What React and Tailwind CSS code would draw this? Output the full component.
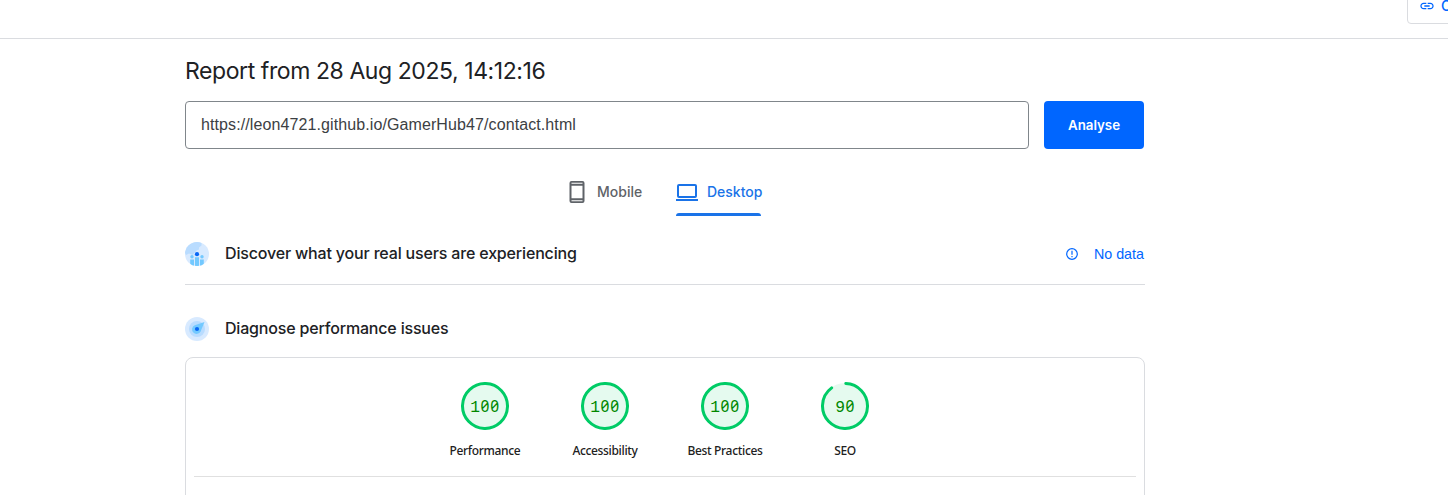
const SCORES = [
  { label: 'Performance', value: 100 },
  { label: 'Accessibility', value: 100 },
  { label: 'Best Practices', value: 100 },
  { label: 'SEO', value: 90 },
];

function Gauge({ label, value }) {
  const c = 2 * Math.PI * 22.5;
  const arc = value === 100 ? c : (value / 100) * c - 1.8;
  return (
    <div className="flex w-[120px] flex-col items-center">
      <div className="relative size-12">
        <svg viewBox="0 0 48 48" className="size-12">
          <circle cx="24" cy="24" r="23" fill="#e5faef" />
          <circle cx="24" cy="24" r="22.5" fill="none" stroke="#00cc66" strokeWidth="3" strokeLinecap="round"
            strokeDasharray={`${arc} ${c}`} transform="rotate(-88 24 24)" />
        </svg>
        <div className="absolute inset-0 flex items-baseline justify-center pt-[13px] font-['Liberation_Mono',monospace] text-[16.3px] leading-[22px] text-[#008800]">
          {String(value).split('').map((d, i) => (
            <span key={i} className={d === '0' ? "w-[9.8px] text-center font-['Noto_Sans',sans-serif] text-[15.5px] slashed-zero" : 'w-[9.8px] text-center'}>{d}</span>
          ))}
        </div>
      </div>
      <div className="mt-[11px] font-['Noto_Sans',sans-serif] text-xs font-medium leading-5 tracking-[-0.33px] whitespace-nowrap text-[#212121]">{label}</div>
    </div>
  );
}

function UsersIcon() {
  return (
    <svg viewBox="0 0 24 24" className="size-6">
      <defs><clipPath id="users"><circle cx="12" cy="12" r="12" /></clipPath></defs>
      <g clipPath="url(#users)">
        <rect width="24" height="24" fill="#d8eaff" />
        <path d="M0 0H16.5V3.5L14 5.5V7.5L11.5 8.5L9 11.5L7.5 13L4 11.5L1 13L0 11Z" fill="#b9dcff" />
        <g fill="#73c9ff">
          <circle cx="7" cy="14.7" r="1.7" /><circle cx="17" cy="14.7" r="1.7" />
          <path d="M5.2 17.5h3.8V24H5.2zM15 17.5h3.8V24H15zM10 15.2h4V24h-4z" />
        </g>
        <circle cx="12" cy="12.2" r="2.1" fill="#0867f5" />
      </g>
    </svg>
  );
}

function DiagnoseIcon() {
  return (
    <svg viewBox="0 0 24 24" className="size-6">
      <circle cx="12" cy="12" r="12" fill="#d8eaff" />
      <circle cx="12" cy="12" r="8" fill="#b9dcff" />
      <path d="M19.5 5L15.7 14.2A4.5 4.5 0 1 1 9.8 8.3Z" fill="#73c9ff" />
      <circle cx="12" cy="12" r="2.1" fill="#0867f5" />
    </svg>
  );
}

export default function App() {
  return (
    <div className="h-[495px] overflow-hidden bg-white font-['Inter',sans-serif] text-[#202124]">
      <header className="flex h-[39px] justify-end overflow-hidden border-b border-[#dadce0]">
        <button className="-mt-3 -mr-[80px] flex h-9 w-[121px] shrink-0 items-center gap-1.5 rounded border border-[#dadce0] pl-[11px] text-sm font-medium text-[#0066ff]">
          <svg viewBox="0 0 24 24" className="size-4 shrink-0" fill="currentColor">
            <path d="M3.9 12c0-1.71 1.39-3.1 3.1-3.1h4V7H7c-2.76 0-5 2.24-5 5s2.24 5 5 5h4v-1.9H7c-1.71 0-3.1-1.39-3.1-3.1zM8 13h8v-2H8v2zm9-6h-4v1.9h4c1.71 0 3.1 1.39 3.1 3.1s-1.39 3.1-3.1 3.1h-4V17h4c2.76 0 5-2.24 5-5s-2.24-5-5-5z" />
          </svg>
          <span className="whitespace-nowrap">Copy Link</span>
        </button>
      </header>
      <main className="ml-[185px] w-[960px]">
        <h1 className="pt-4 text-[23px] leading-8 tracking-[-0.42px] whitespace-nowrap">Report from 28 Aug 2025, 14:12:16</h1>
        <div className="mt-[14px] flex gap-[15px]">
          <div className="flex h-12 w-[844px] items-center rounded border border-[#80868b] pl-[15px] font-['Liberation_Sans',sans-serif] text-base tracking-[0.1px] text-[#3c4043]">https://leon4721.github.io/GamerHub47/contact.html</div>
          <button className="h-12 w-[100px] rounded bg-[#0066ff] pt-px text-[13.3px] font-semibold text-white">Analyse</button>
        </div>
        <nav className="mt-[19px] ml-[380px] flex h-12 gap-[33px] text-sm font-medium">
          <div className="flex h-12 items-center gap-2 text-[#5f6368]">
            <svg viewBox="0 0 24 24" className="size-6" fill="currentColor">
              <path fillRule="evenodd" d="M6.5 1h11q2 0 2 2v18q0 2-2 2h-11q-2 0-2-2V3q0-2 2-2zm0 1.8v1h11v-1zm0 3v12.4h11V5.800zm0 14.400v1h11v-1z" />
            </svg>
            <span className="w-[46px]">Mobile</span>
          </div>
          <div className="flex h-12 w-[85px] flex-col text-[#1a73e8]">
            <div className="-ml-px flex h-[45px] items-center pt-[3px]">
              <svg viewBox="0 0 24 24" className="size-6 shrink-0" fill="currentColor">
                <path fillRule="evenodd" d="M4 4h16q2 0 2 2v10q0 2-2 2H4q-2 0-2-2V6q0-2 2-2zm0 2v10h16V6zM1 19h22v2H1z" />
              </svg>
              <span className="ml-2">Desktop</span>
            </div>
            <div className="h-[3px] rounded-t-[3px] bg-[#1a73e8]" />
          </div>
        </nav>
        <section className="flex h-[69px] items-center border-b border-[#dadce0] pt-2">
          <UsersIcon />
          <h2 className="ml-4 pb-0.5 text-base font-medium tracking-[-0.17px]">Discover what your real users are experiencing</h2>
          <div className="mr-px ml-auto flex items-center gap-[15px] font-['Liberation_Sans',sans-serif] text-[14.3px] text-[#0066ff]">
            <svg viewBox="0 0 14 14" className="size-[14px]" fill="none" stroke="currentColor" strokeWidth="1.2">
              <circle cx="7" cy="7" r="5.3" /><path d="M7 3.8v4M7 9v1.3" />
            </svg>
            <span className="pt-px">No data</span>
          </div>
        </section>
        <section className="mt-8 flex h-6 items-center gap-4">
          <DiagnoseIcon />
          <h2 className="pb-0.5 text-base font-medium tracking-[-0.18px]">Diagnose performance issues</h2>
        </section>
        <section className="mt-4 h-[200px] rounded-lg border border-[#dadce0] px-2 pt-6">
          <div className="flex h-[95px] justify-center border-b border-[#e0e0e0]">
            {SCORES.map((s) => <Gauge key={s.label} {...s} />)}
          </div>
        </section>
      </main>
    </div>
  );
}
